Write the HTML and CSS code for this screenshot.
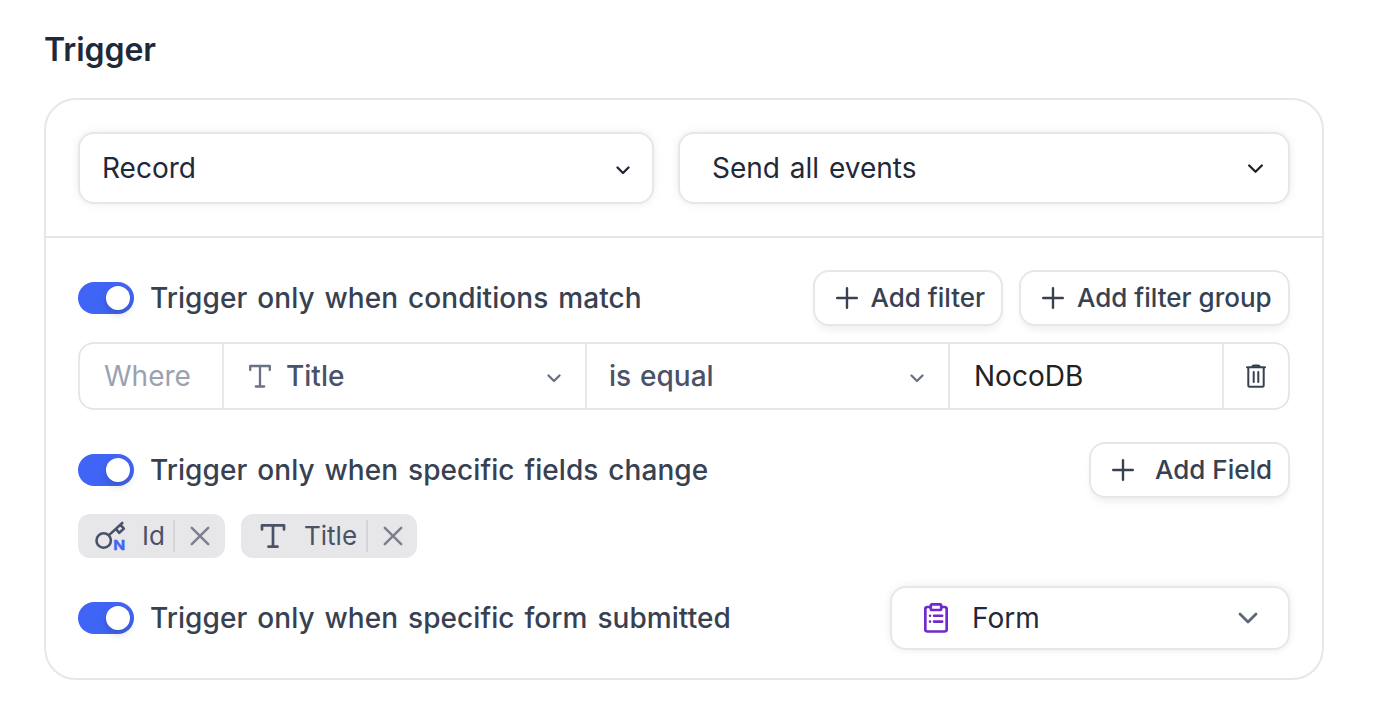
FILE: index.html
```
<!DOCTYPE html>
<html lang="en">
<head>
<meta charset="utf-8">
<title>Trigger</title>
<link rel="stylesheet" href="styles.css">
</head>
<body>
<main class="page">
  <h1 class="heading">Trigger</h1>
  <section class="card">
    <div class="selects">
      <div class="select select-source"><span>Record</span>
        <svg width="14" height="9" viewBox="0 0 14 9" class="ico"><path d="M1.500 1.500 7 7l5.500-5.500" stroke-width="2.300"/></svg>
      </div>
      <div class="select select-event"><span>Send all events</span>
        <svg width="15" height="10" viewBox="0 0 15 10" class="ico ink"><path d="M1.200 1.500 7.500 7.800l6.300-6.300" stroke-width="2.300"/></svg>
      </div>
    </div>
    <div class="rules">
      <div class="row">
        <i class="toggle"></i><span class="label">Trigger only when conditions match</span>
        <button class="btn btn-filter"><svg width="22" height="22" viewBox="0 0 22 22" class="ico"><path d="M11 1.200v19.600M1.200 11h19.600" stroke-width="2.400"/></svg><span>Add filter</span></button>
        <button class="btn btn-group"><svg width="22" height="22" viewBox="0 0 22 22" class="ico"><path d="M11 1.200v19.600M1.200 11h19.600" stroke-width="2.400"/></svg><span>Add filter group</span></button>
      </div>
      <div class="filter">
        <div class="cell cell-where"><span>Where</span></div>
        <div class="cell cell-field">
          <svg width="22" height="24" viewBox="0 0 22 24" class="ico"><path d="M1.200 6V2h19.600v4M11 2v20.500M6.800 22.500h8.400" stroke-width="2.300"/></svg>
          <span>Title</span>
          <svg width="14" height="9" viewBox="0 0 14 9" class="ico chev"><path d="M1.500 1.500 7 7l5.500-5.500" stroke-width="2.300"/></svg>
        </div>
        <div class="cell cell-op"><span>is equal</span>
          <svg width="14" height="9" viewBox="0 0 14 9" class="ico chev"><path d="M1.500 1.500 7 7l5.500-5.500" stroke-width="2.300"/></svg>
        </div>
        <div class="cell cell-value"><span>NocoDB</span></div>
        <div class="cell cell-trash"><svg width="20" height="24" viewBox="0 0 20 24" class="ico"><path d="M1 3.200h18M6 2.800q.5-1.300 1.800-1.300h4.400q1.300 0 1.800 1.300M2.300 3.500v17.700q0 1.500 1.500 1.500h12.400q1.500 0 1.500-1.500V3.500" stroke-width="2"/><path d="M7.700 8v10M12.300 8v10" stroke-width="2"/></svg></div>
      </div>
      <div class="row">
        <i class="toggle"></i><span class="label">Trigger only when specific fields change</span>
        <button class="btn btn-field"><svg width="22" height="22" viewBox="0 0 22 22" class="ico"><path d="M11 1.200v19.600M1.200 11h19.600" stroke-width="2.400"/></svg><span>Add Field</span></button>
      </div>
      <div class="tags">
        <div class="tag tag-id">
          <svg width="32" height="32" viewBox="0 0 32 32" class="ico"><circle cx="9.700" cy="20.500" r="7.200" stroke-width="2.600"/><path d="M15 15.100 28.300 3M21.800 8.900l3.500 3.900 4.600-4.200-3.500-3.800" stroke-width="2.600"/><text x="19.200" y="30" textLength="12" lengthAdjust="spacingAndGlyphs" class="mark">N</text></svg>
          <span>Id</span><i class="bar"></i>
          <svg width="20" height="20" viewBox="0 0 20 20" class="ico x"><path d="m1.800 1.800 16.400 16.400M18.200 1.800 1.800 18.200" stroke-width="2.500"/></svg>
        </div>
        <div class="tag tag-title">
          <svg width="26" height="26" viewBox="0 0 26 26" class="ico"><path d="M2 6.500V2.300h22v4.200M13 2.300v21.400M8.500 23.700h9" stroke-width="2.700"/></svg>
          <span>Title</span><i class="bar"></i>
          <svg width="20" height="20" viewBox="0 0 20 20" class="ico x"><path d="m1.800 1.800 16.400 16.400M18.200 1.800 1.800 18.200" stroke-width="2.500"/></svg>
        </div>
      </div>
      <div class="row row-form">
        <i class="toggle"></i><span class="label">Trigger only when specific form submitted</span>
        <div class="select select-form">
          <svg width="24" height="30" viewBox="0 0 24 30" class="ico form"><path d="M6.500 4H3.500Q1.300 4 1.300 6.200v20.100q0 2.200 2.200 2.200h17q2.200 0 2.200-2.200V6.200Q22.700 4 20.500 4h-3M6.800 2.600q0-1.200 1.200-1.200h8q1.200 0 1.200 1.200v3.200q0 1.200-1.200 1.200H8q-1.200 0-1.200-1.200z" stroke-width="2.700"/><path d="M6 12.700h.01M6 18.600h.01M10 12.700h8.200M10 18.600h8.200" stroke-width="2.600"/></svg>
          <span>Form</span>
          <svg width="20" height="12" viewBox="0 0 20 12" class="ico chev"><path d="m2 2 8 8 8-8" stroke-width="2.800"/></svg>
        </div>
      </div>
    </div>
  </section>
</main>
</body>
</html>
```
FILE: styles.css
```
*{box-sizing:border-box}
body{margin:0;background:#fff;color:#1f293a;font-family:Inter,"Liberation Sans",sans-serif;font-size:28px;line-height:36px}
.page{width:1374px;height:728px;padding:30px 50px 0 44px;overflow:hidden}
.heading{margin:0 0 28px;font-size:32px;line-height:40px;font-weight:600;letter-spacing:-.05px}
.card{width:1280px;height:582px;border:2px solid #e7e7e9;border-radius:32px}
.ico{flex:none;fill:none;stroke:currentColor;stroke-linecap:round;stroke-linejoin:round}
.selects{display:flex;gap:24px;height:138px;padding:32px;border-bottom:2px solid #e7e7e9}
.select{display:flex;align-items:center;justify-content:space-between;border:2px solid #e7e7e9;border-radius:16px;background:#fff;box-shadow:0 0 8px rgba(0,0,0,.08)}
.select-source{width:576px;padding:0 22.500px 0 22px}
.select-source .ico{margin-top:4px}
.select-event{width:612px;padding:0 25px 0 32px;word-spacing:2px}
.select-event .ico{margin-top:2px}
.ink{color:#222}
.rules{padding:32px}
.row{display:flex;align-items:center;height:56px;gap:16px}
.toggle{flex:none;width:56px;height:32px;padding:4px;border-radius:16px;background:#4065f6}
.toggle::after{content:"";display:block;width:24px;height:24px;margin-left:24px;border-radius:50%;background:#fff;box-shadow:0 4px 8px rgba(0,35,11,.2)}
.label{flex:1;color:#374151;font-weight:500;white-space:nowrap;word-spacing:2.400px;letter-spacing:.06px}
.btn{display:flex;align-items:center;height:56px;margin:0;border:2px solid #e7e7e9;border-radius:16px;background:#fff;color:#374151;font:500 26px/36px Inter,"Liberation Sans",sans-serif;white-space:nowrap;box-shadow:0 6px 8px -3px rgba(0,0,0,.08)}
.btn-filter{width:190px;padding:0 0 0 21px;gap:12.500px}
.btn-group{width:271px;padding:0 0 0 21px;gap:13px}
.btn-field{width:201px;padding:0 0 0 21px;gap:21px}
.filter{display:flex;height:68px;margin:16px 0 32px;border:2px solid #e7e7e9;border-radius:16px;color:#4a5268}
.cell{display:flex;align-items:center;border-right:2px solid #e7e7e9}
.cell-where{width:144px;padding-left:24px;color:#9aa2b1}
.cell-field{width:363px;padding:0 24.500px 0 25px;gap:15px;font-weight:500}
.cell-field .ico{color:#6a7184}
.cell-op{width:363px;padding:0 24.500px 0 22px;font-weight:500;word-spacing:1.500px}
.cell .chev{margin-left:auto;margin-top:4px;color:#6a7184}
.cell-value{width:274px;padding-left:24px;color:#222}
.cell-trash{flex:1;border:0;justify-content:center;color:#374151}
.tags{display:flex;gap:16px;height:44px;margin:16px 0 28px}
.tag{display:flex;align-items:center;border-radius:12px;background:#e7e7e9;color:#4a5268;font-size:26px}
.tag-id{width:147px;padding-left:16px}
.tag-id span{margin:0 8px 0 16px}
.tag-title{width:176px;padding-left:19px}
.tag-title span{margin:0 9px 0 18px}
.bar{width:2px;height:32px;background:#d5d5d9}
.x{margin-left:15px;color:#7a8090}
.mark{font:700 12.500px Inter,sans-serif;fill:#4065f6;stroke:#4065f6;stroke-width:.3px}
.row-form{height:64px}
.select-form{width:400px;height:64px;padding:0 30px 0 32px;justify-content:flex-start}
.select-form span{margin-left:24px}
.select-form .chev{margin-left:auto;color:#5d6678}
.form{color:#7029cc}
```
